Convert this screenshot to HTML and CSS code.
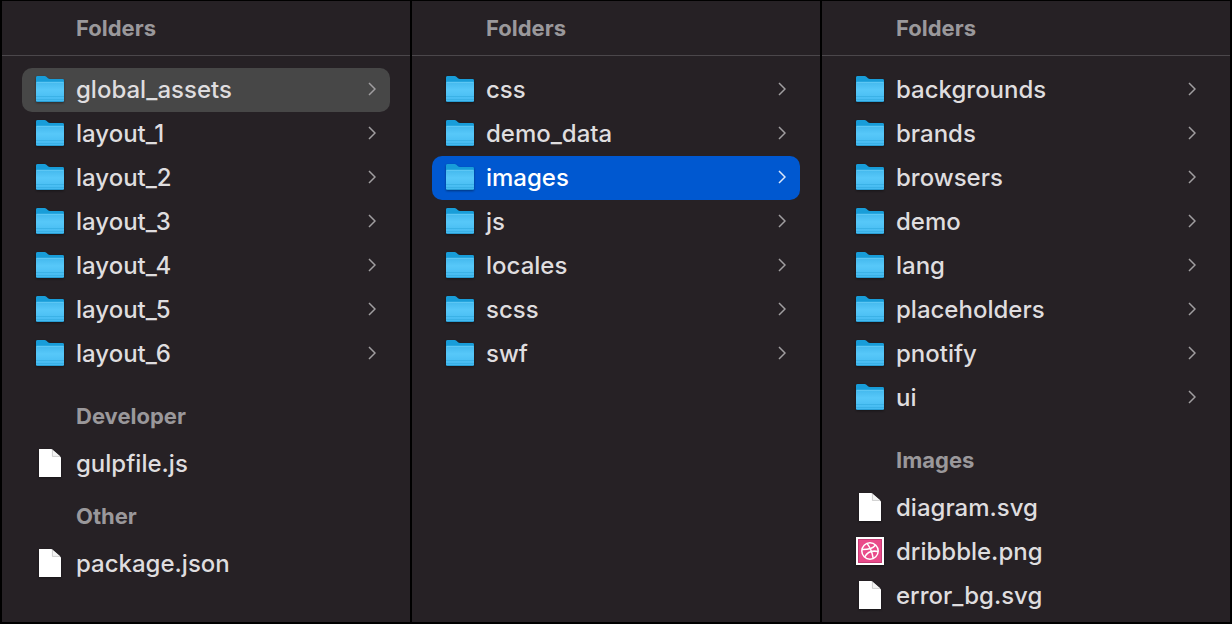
FILE: index.html
```
<!DOCTYPE html>
<html lang="en">
<head>
    <meta charset="UTF-8">
    <meta name="viewport" content="width=device-width, initial-scale=1.0">
    <title>File Browser</title>
    <link rel="stylesheet" href="styles.css">
</head>
<body>
    <!-- Shared icons -->
    <svg class="icon-defs" width="0" height="0" aria-hidden="true">
        <defs>
            <linearGradient id="folderFront" x1="0" y1="0" x2="0" y2="1">
                <stop offset="0" stop-color="#43b8ed"/>
                <stop offset="0.4" stop-color="#57c8f9"/>
                <stop offset="1" stop-color="#43b9f0"/>
            </linearGradient>
        </defs>
        <symbol id="folder" viewBox="0 0 28 28">
            <path d="M0 2.4Q0 1 1.6 1H8.6Q9.6 1 10.4 1.7L12 3.2Q12.8 4 14 4H26.6Q28 4 28 5.4V12H0Z" fill="#189dd9"/>
            <path d="M0 8Q0 6.8 1.2 6.8H26.8Q28 6.8 28 8V25.6Q28 27 26.6 27H1.4Q0 27 0 25.6Z" fill="url(#folderFront)"/>
            <path d="M0.5 7.4H27.5" stroke="#67cdf6" stroke-width="0.8"/>
            <path d="M0 21.5H28M0 24.5H28" stroke="#37aee3" stroke-width="0.8"/>
            <path d="M0.4 26.6H27.6" stroke="#1f92c8" stroke-width="0.8"/>
        </symbol>
        <symbol id="file" viewBox="0 0 28 28">
            <path d="M3 0H15.5L25 8.5V28.6H3Z" fill="#fff"/>
            <path d="M16 0.3V7.4H24.6Z" fill="#f4f4f4"/>
            <path d="M16.4 1V7.4H23.5" fill="none" stroke="#c4c4c4" stroke-width="0.8"/>
        </symbol>
        <symbol id="dribbble" viewBox="0 0 28 28">
            <path d="M0 0H28V28H0Z" fill="#fff"/>
            <path d="M2 2H26V26H2Z" fill="#e94b8a"/>
            <path d="M2.5 2.5H25.5V25.5H2.5Z" fill="none" stroke="#c83c75"/>
            <g fill="none" stroke="#fff" stroke-width="1.5">
                <circle cx="14" cy="14" r="8.2"/>
                <path d="M11 6.4C14 10.2 16.2 15 17.2 21.5"/>
                <path d="M6 12.6C11.5 12.7 16.6 11.8 19.6 8"/>
                <path d="M8.7 20C11.2 15.4 16 13.2 22.1 14.6"/>
            </g>
        </symbol>
        <symbol id="chevron" viewBox="0 0 8 14">
            <path d="M1 1L7 7L1 13" fill="none" stroke="currentColor" stroke-width="1.5"/>
        </symbol>
    </svg>

    <main class="browser">
        <section class="column">
            <h2 class="column-title">Folders</h2>
            <ul class="list">
                <li><a class="row selected" href="#"><svg class="icon"><use href="#folder"/></svg><span class="name">global_assets</span><svg class="chevron"><use href="#chevron"/></svg></a></li>
                <li><a class="row" href="#"><svg class="icon"><use href="#folder"/></svg><span class="name">layout_1</span><svg class="chevron"><use href="#chevron"/></svg></a></li>
                <li><a class="row" href="#"><svg class="icon"><use href="#folder"/></svg><span class="name">layout_2</span><svg class="chevron"><use href="#chevron"/></svg></a></li>
                <li><a class="row" href="#"><svg class="icon"><use href="#folder"/></svg><span class="name">layout_3</span><svg class="chevron"><use href="#chevron"/></svg></a></li>
                <li><a class="row" href="#"><svg class="icon"><use href="#folder"/></svg><span class="name">layout_4</span><svg class="chevron"><use href="#chevron"/></svg></a></li>
                <li><a class="row" href="#"><svg class="icon"><use href="#folder"/></svg><span class="name">layout_5</span><svg class="chevron"><use href="#chevron"/></svg></a></li>
                <li><a class="row" href="#"><svg class="icon"><use href="#folder"/></svg><span class="name">layout_6</span><svg class="chevron"><use href="#chevron"/></svg></a></li>
            </ul>
            <h3 class="group-title after-folders">Developer</h3>
            <ul class="list">
                <li><a class="row" href="#"><svg class="icon"><use href="#file"/></svg><span class="name">gulpfile.js</span></a></li>
            </ul>
            <h3 class="group-title">Other</h3>
            <ul class="list">
                <li><a class="row" href="#"><svg class="icon"><use href="#file"/></svg><span class="name">package.json</span></a></li>
            </ul>
        </section>

        <section class="column">
            <h2 class="column-title">Folders</h2>
            <ul class="list">
                <li><a class="row" href="#"><svg class="icon"><use href="#folder"/></svg><span class="name">css</span><svg class="chevron"><use href="#chevron"/></svg></a></li>
                <li><a class="row" href="#"><svg class="icon"><use href="#folder"/></svg><span class="name">demo_data</span><svg class="chevron"><use href="#chevron"/></svg></a></li>
                <li><a class="row active" href="#"><svg class="icon"><use href="#folder"/></svg><span class="name">images</span><svg class="chevron"><use href="#chevron"/></svg></a></li>
                <li><a class="row" href="#"><svg class="icon"><use href="#folder"/></svg><span class="name">js</span><svg class="chevron"><use href="#chevron"/></svg></a></li>
                <li><a class="row" href="#"><svg class="icon"><use href="#folder"/></svg><span class="name">locales</span><svg class="chevron"><use href="#chevron"/></svg></a></li>
                <li><a class="row" href="#"><svg class="icon"><use href="#folder"/></svg><span class="name">scss</span><svg class="chevron"><use href="#chevron"/></svg></a></li>
                <li><a class="row" href="#"><svg class="icon"><use href="#folder"/></svg><span class="name">swf</span><svg class="chevron"><use href="#chevron"/></svg></a></li>
            </ul>
        </section>

        <section class="column">
            <h2 class="column-title">Folders</h2>
            <ul class="list">
                <li><a class="row" href="#"><svg class="icon"><use href="#folder"/></svg><span class="name">backgrounds</span><svg class="chevron"><use href="#chevron"/></svg></a></li>
                <li><a class="row" href="#"><svg class="icon"><use href="#folder"/></svg><span class="name">brands</span><svg class="chevron"><use href="#chevron"/></svg></a></li>
                <li><a class="row" href="#"><svg class="icon"><use href="#folder"/></svg><span class="name">browsers</span><svg class="chevron"><use href="#chevron"/></svg></a></li>
                <li><a class="row" href="#"><svg class="icon"><use href="#folder"/></svg><span class="name">demo</span><svg class="chevron"><use href="#chevron"/></svg></a></li>
                <li><a class="row" href="#"><svg class="icon"><use href="#folder"/></svg><span class="name">lang</span><svg class="chevron"><use href="#chevron"/></svg></a></li>
                <li><a class="row" href="#"><svg class="icon"><use href="#folder"/></svg><span class="name">placeholders</span><svg class="chevron"><use href="#chevron"/></svg></a></li>
                <li><a class="row" href="#"><svg class="icon"><use href="#folder"/></svg><span class="name">pnotify</span><svg class="chevron"><use href="#chevron"/></svg></a></li>
                <li><a class="row" href="#"><svg class="icon"><use href="#folder"/></svg><span class="name">ui</span><svg class="chevron"><use href="#chevron"/></svg></a></li>
            </ul>
            <h3 class="group-title after-folders">Images</h3>
            <ul class="list">
                <li><a class="row" href="#"><svg class="icon"><use href="#file"/></svg><span class="name">diagram.svg</span></a></li>
                <li><a class="row" href="#"><svg class="icon"><use href="#dribbble"/></svg><span class="name">dribbble.png</span></a></li>
                <li><a class="row" href="#"><svg class="icon"><use href="#file"/></svg><span class="name">error_bg.svg</span></a></li>
            </ul>
        </section>
    </main>
</body>
</html>
```
FILE: styles.css
```
* {
    box-sizing: border-box;
}

body {
    font-family: Inter, "Liberation Sans", sans-serif;
    margin: 0;
    background: #000;
    color: #dfdddf;
}

.icon-defs {
    position: absolute;
}

.browser {
    display: grid;
    grid-template-columns: repeat(3, 1fr);
    gap: 2px;
    min-height: 100vh;
    padding: 1px 2px 2px;
}

.column {
    background: #262125;
    padding-bottom: 4px;
}

.column-title,
.group-title {
    margin: 0;
    padding-left: 74px;
    color: #9a989b;
    font-size: 22px;
    font-weight: 700;
    line-height: 52px;
}

.column-title {
    height: 55px;
    padding-top: 1px;
    border-bottom: 1px solid #4b474b;
    margin-bottom: 12px;
}

.group-title {
    padding-top: 4px;
}

.after-folders {
    margin-top: 10px;
}

.list {
    list-style: none;
    margin: 0;
    padding: 0 20px;
}

.row {
    display: flex;
    align-items: center;
    gap: 12px;
    height: 44px;
    padding: 0 14px;
    border-radius: 10px;
    color: inherit;
    font-size: 24px;
    font-weight: 500;
    line-height: 44px;
    text-decoration: none;
}

.row.selected {
    background: #474747;
}

.row.active {
    background: #0058d0;
    color: #fff;
}

.icon,
.chevron {
    flex: none;
    margin-bottom: 2px;
}

.icon {
    width: 28px;
    height: 28px;
    overflow: visible;
    filter: drop-shadow(0 1px 1px rgba(0, 0, 0, 0.4));
}

.name {
    flex: 1;
}

.chevron {
    width: 8px;
    height: 14px;
    color: #a09ea0;
}

.active .chevron {
    color: #dce8fa;
}
```
